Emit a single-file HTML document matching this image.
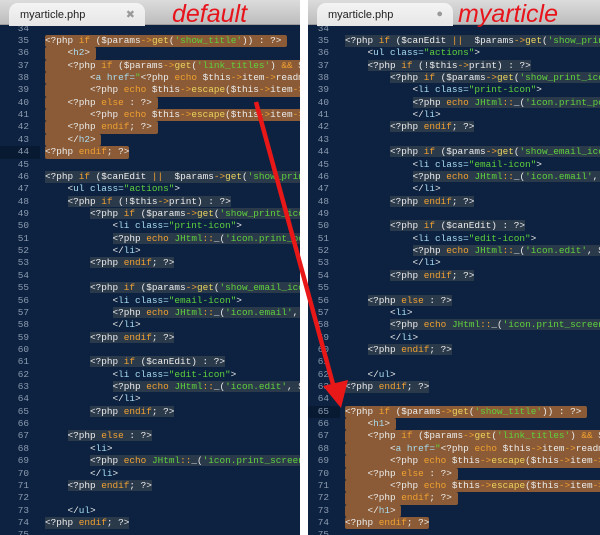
<!DOCTYPE html>
<html><head><meta charset="utf-8"><style>
*{margin:0;padding:0;box-sizing:border-box}
body{width:600px;height:535px;background:#fff;position:relative;overflow:hidden;font-family:"Liberation Mono",monospace}
.panel{position:absolute;top:0;height:535px;background:#0c2240;overflow:hidden}
.tabbar{position:absolute;left:0;top:0;right:0;height:25px;background:linear-gradient(#dcdcdc,#bdbdbd);border-bottom:1px solid #9a9a9a;z-index:3}
.tab{position:absolute;left:9px;top:3px;width:136px;height:23px;background:linear-gradient(#f4f4f4,#e6e6e6);border-radius:9px 9px 0 0;font-family:"Liberation Sans",sans-serif;font-size:11px;color:#222;padding:6px 0 0 11px}
.tab i{position:absolute;right:10px;top:5px;font-style:normal;color:#999;font-size:11px}
.hand{position:absolute;top:0px;font-family:"Liberation Sans",sans-serif;font-size:25px;color:#e8141c;letter-spacing:0px;z-index:4;font-style:italic}
.code{position:absolute;top:22.6px;left:0;right:0}
.l{height:12.36px;line-height:12.36px;font-size:9.4px;white-space:pre;position:relative;color:#ececec}
.n{position:absolute;left:0;width:29px;text-align:right;color:#8c9bb0}
.c{position:absolute;left:45px}
.R .n{width:21px}
.R .c{left:37px}
.cur .n{background:#081a31;width:40px;padding-right:11px}
.R .cur .n{width:32px}
.S{background:#8a5b36;border-radius:2px}
.G{background:#2b3a4b}
.k{color:#f0a030}.s{color:#5fd13c}.f{color:#ecd45e}.o{color:#f0a030}.t{color:#a8dcf0}
</style></head><body>

<div class="panel" style="left:0;width:300px">
<div class="tabbar"><div class="tab">myarticle.php<i>✖</i></div></div>
<div class="hand" style="left:172px">default</div>
<div class="code">
<div class="l"><span class="n">34</span><span class="c"></span></div>
<div class="l"><span class="n">35</span><span class="c S">&lt;?php <span class="k">if</span> ($params<span class="o">-&gt;</span><span class="f">get</span>(<span class="s">'show_title'</span>)) : ?&gt; </span></div>
<div class="l"><span class="n">36</span><span class="c S">    &lt;<span class="t">h2</span>&gt; </span></div>
<div class="l"><span class="n">37</span><span class="c S">    &lt;?php <span class="k">if</span> ($params<span class="o">-&gt;</span><span class="f">get</span>(<span class="s">'link_titles'</span>) <span class="k">&amp;&amp;</span> $params<span class="o">-&gt;</span><span class="f">get</span>(<span class="s">'access-view'</span>)) : ?&gt;</span></div>
<div class="l"><span class="n">38</span><span class="c S">        &lt;<span class="t">a href=</span><span class="s">"</span>&lt;?php <span class="k">echo</span> $this<span class="o">-&gt;</span>item<span class="o">-&gt;</span>readmore_link; ?&gt;<span class="s">"</span>&gt;</span></div>
<div class="l"><span class="n">39</span><span class="c S">        &lt;?php <span class="k">echo</span> $this<span class="o">-&gt;</span><span class="f">escape</span>($this<span class="o">-&gt;</span>item<span class="o">-&gt;</span>title); ?&gt;&lt;/a&gt;</span></div>
<div class="l"><span class="n">40</span><span class="c S">    &lt;?php <span class="k">else</span> : ?&gt; </span></div>
<div class="l"><span class="n">41</span><span class="c S">        &lt;?php <span class="k">echo</span> $this<span class="o">-&gt;</span><span class="f">escape</span>($this<span class="o">-&gt;</span>item<span class="o">-&gt;</span>title); ?&gt;</span></div>
<div class="l"><span class="n">42</span><span class="c S">    &lt;?php <span class="k">endif</span>; ?&gt; </span></div>
<div class="l"><span class="n">43</span><span class="c S">    &lt;/<span class="t">h2</span>&gt; </span></div>
<div class="l cur"><span class="n">44</span><span class="c S">&lt;?php <span class="k">endif</span>; ?&gt;</span></div>
<div class="l"><span class="n">45</span><span class="c"></span></div>
<div class="l"><span class="n">46</span><span class="c G">&lt;?php <span class="k">if</span> ($canEdit <span class="k">||</span>  $params<span class="o">-&gt;</span><span class="f">get</span>(<span class="s">'show_print_icon'</span>)</span></div>
<div class="l"><span class="n">47</span><span class="c">    &lt;<span class="t">ul class=</span><span class="s">"actions"</span>&gt;</span></div>
<div class="l"><span class="n">48</span><span class="c">    <span class="G">&lt;?php <span class="k">if</span> (!$this<span class="o">-&gt;</span>print) : ?&gt;</span></span></div>
<div class="l"><span class="n">49</span><span class="c">        <span class="G">&lt;?php <span class="k">if</span> ($params<span class="o">-&gt;</span><span class="f">get</span>(<span class="s">'show_print_icon'</span>)) : ?&gt;</span></span></div>
<div class="l"><span class="n">50</span><span class="c">            &lt;<span class="t">li class=</span><span class="s">"print-icon"</span>&gt;</span></div>
<div class="l"><span class="n">51</span><span class="c">            <span class="G">&lt;?php <span class="k">echo</span> <span class="s">JHtml</span><span class="o">::</span>_(<span class="s">'icon.print_popup'</span>, $this</span></span></div>
<div class="l"><span class="n">52</span><span class="c">            &lt;/<span class="t">li</span>&gt;</span></div>
<div class="l"><span class="n">53</span><span class="c">        <span class="G">&lt;?php <span class="k">endif</span>; ?&gt;</span></span></div>
<div class="l"><span class="n">54</span><span class="c"></span></div>
<div class="l"><span class="n">55</span><span class="c">        <span class="G">&lt;?php <span class="k">if</span> ($params<span class="o">-&gt;</span><span class="f">get</span>(<span class="s">'show_email_icon'</span>)) : ?&gt;</span></span></div>
<div class="l"><span class="n">56</span><span class="c">            &lt;<span class="t">li class=</span><span class="s">"email-icon"</span>&gt;</span></div>
<div class="l"><span class="n">57</span><span class="c">            <span class="G">&lt;?php <span class="k">echo</span> <span class="s">JHtml</span><span class="o">::</span>_(<span class="s">'icon.email'</span>, $this</span></span></div>
<div class="l"><span class="n">58</span><span class="c">            &lt;/<span class="t">li</span>&gt;</span></div>
<div class="l"><span class="n">59</span><span class="c">        <span class="G">&lt;?php <span class="k">endif</span>; ?&gt;</span></span></div>
<div class="l"><span class="n">60</span><span class="c"></span></div>
<div class="l"><span class="n">61</span><span class="c">        <span class="G">&lt;?php <span class="k">if</span> ($canEdit) : ?&gt;</span></span></div>
<div class="l"><span class="n">62</span><span class="c">            &lt;<span class="t">li class=</span><span class="s">"edit-icon"</span>&gt;</span></div>
<div class="l"><span class="n">63</span><span class="c">            <span class="G">&lt;?php <span class="k">echo</span> <span class="s">JHtml</span><span class="o">::</span>_(<span class="s">'icon.edit'</span>, $this</span></span></div>
<div class="l"><span class="n">64</span><span class="c">            &lt;/<span class="t">li</span>&gt;</span></div>
<div class="l"><span class="n">65</span><span class="c">        <span class="G">&lt;?php <span class="k">endif</span>; ?&gt;</span></span></div>
<div class="l"><span class="n">66</span><span class="c"></span></div>
<div class="l"><span class="n">67</span><span class="c">    <span class="G">&lt;?php <span class="k">else</span> : ?&gt;</span></span></div>
<div class="l"><span class="n">68</span><span class="c">        &lt;<span class="t">li</span>&gt;</span></div>
<div class="l"><span class="n">69</span><span class="c">        <span class="G">&lt;?php <span class="k">echo</span> <span class="s">JHtml</span><span class="o">::</span>_(<span class="s">'icon.print_screen'</span>, $this</span></span></div>
<div class="l"><span class="n">70</span><span class="c">        &lt;/<span class="t">li</span>&gt;</span></div>
<div class="l"><span class="n">71</span><span class="c">    <span class="G">&lt;?php <span class="k">endif</span>; ?&gt;</span></span></div>
<div class="l"><span class="n">72</span><span class="c"></span></div>
<div class="l"><span class="n">73</span><span class="c">    &lt;/<span class="t">ul</span>&gt;</span></div>
<div class="l"><span class="n">74</span><span class="c G">&lt;?php <span class="k">endif</span>; ?&gt;</span></div>
<div class="l"><span class="n">75</span><span class="c"></span></div>
</div>
</div>

<div class="panel R" style="left:308px;width:292px">
<div class="tabbar"><div class="tab">myarticle.php<i>●</i></div></div>
<div class="hand" style="left:150px">myarticle</div>
<div class="code">
<div class="l"><span class="n">34</span><span class="c"></span></div>
<div class="l"><span class="n">35</span><span class="c G">&lt;?php <span class="k">if</span> ($canEdit <span class="k">||</span>  $params<span class="o">-&gt;</span><span class="f">get</span>(<span class="s">'show_print_icon'</span>)</span></div>
<div class="l"><span class="n">36</span><span class="c">    &lt;<span class="t">ul class=</span><span class="s">"actions"</span>&gt;</span></div>
<div class="l"><span class="n">37</span><span class="c">    <span class="G">&lt;?php <span class="k">if</span> (!$this<span class="o">-&gt;</span>print) : ?&gt;</span></span></div>
<div class="l"><span class="n">38</span><span class="c">        <span class="G">&lt;?php <span class="k">if</span> ($params<span class="o">-&gt;</span><span class="f">get</span>(<span class="s">'show_print_icon'</span>)) : ?&gt;</span></span></div>
<div class="l"><span class="n">39</span><span class="c">            &lt;<span class="t">li class=</span><span class="s">"print-icon"</span>&gt;</span></div>
<div class="l"><span class="n">40</span><span class="c">            <span class="G">&lt;?php <span class="k">echo</span> <span class="s">JHtml</span><span class="o">::</span>_(<span class="s">'icon.print_popup'</span>, $this</span></span></div>
<div class="l"><span class="n">41</span><span class="c">            &lt;/<span class="t">li</span>&gt;</span></div>
<div class="l"><span class="n">42</span><span class="c">        <span class="G">&lt;?php <span class="k">endif</span>; ?&gt;</span></span></div>
<div class="l"><span class="n">43</span><span class="c"></span></div>
<div class="l"><span class="n">44</span><span class="c">        <span class="G">&lt;?php <span class="k">if</span> ($params<span class="o">-&gt;</span><span class="f">get</span>(<span class="s">'show_email_icon'</span>)) : ?&gt;</span></span></div>
<div class="l"><span class="n">45</span><span class="c">            &lt;<span class="t">li class=</span><span class="s">"email-icon"</span>&gt;</span></div>
<div class="l"><span class="n">46</span><span class="c">            <span class="G">&lt;?php <span class="k">echo</span> <span class="s">JHtml</span><span class="o">::</span>_(<span class="s">'icon.email'</span>, $this</span></span></div>
<div class="l"><span class="n">47</span><span class="c">            &lt;/<span class="t">li</span>&gt;</span></div>
<div class="l"><span class="n">48</span><span class="c">        <span class="G">&lt;?php <span class="k">endif</span>; ?&gt;</span></span></div>
<div class="l"><span class="n">49</span><span class="c"></span></div>
<div class="l"><span class="n">50</span><span class="c">        <span class="G">&lt;?php <span class="k">if</span> ($canEdit) : ?&gt;</span></span></div>
<div class="l"><span class="n">51</span><span class="c">            &lt;<span class="t">li class=</span><span class="s">"edit-icon"</span>&gt;</span></div>
<div class="l"><span class="n">52</span><span class="c">            <span class="G">&lt;?php <span class="k">echo</span> <span class="s">JHtml</span><span class="o">::</span>_(<span class="s">'icon.edit'</span>, $this</span></span></div>
<div class="l"><span class="n">53</span><span class="c">            &lt;/<span class="t">li</span>&gt;</span></div>
<div class="l"><span class="n">54</span><span class="c">        <span class="G">&lt;?php <span class="k">endif</span>; ?&gt;</span></span></div>
<div class="l"><span class="n">55</span><span class="c"></span></div>
<div class="l"><span class="n">56</span><span class="c">    <span class="G">&lt;?php <span class="k">else</span> : ?&gt;</span></span></div>
<div class="l"><span class="n">57</span><span class="c">        &lt;<span class="t">li</span>&gt;</span></div>
<div class="l"><span class="n">58</span><span class="c">        <span class="G">&lt;?php <span class="k">echo</span> <span class="s">JHtml</span><span class="o">::</span>_(<span class="s">'icon.print_screen'</span>, $this</span></span></div>
<div class="l"><span class="n">59</span><span class="c">        &lt;/<span class="t">li</span>&gt;</span></div>
<div class="l"><span class="n">60</span><span class="c">    <span class="G">&lt;?php <span class="k">endif</span>; ?&gt;</span></span></div>
<div class="l"><span class="n">61</span><span class="c"></span></div>
<div class="l"><span class="n">62</span><span class="c">    &lt;/<span class="t">ul</span>&gt;</span></div>
<div class="l"><span class="n">63</span><span class="c G">&lt;?php <span class="k">endif</span>; ?&gt;</span></div>
<div class="l"><span class="n">64</span><span class="c"></span></div>
<div class="l cur"><span class="n">65</span><span class="c S">&lt;?php <span class="k">if</span> ($params<span class="o">-&gt;</span><span class="f">get</span>(<span class="s">'show_title'</span>)) : ?&gt; </span></div>
<div class="l"><span class="n">66</span><span class="c S">    &lt;<span class="t">h1</span>&gt; </span></div>
<div class="l"><span class="n">67</span><span class="c S">    &lt;?php <span class="k">if</span> ($params<span class="o">-&gt;</span><span class="f">get</span>(<span class="s">'link_titles'</span>) <span class="k">&amp;&amp;</span> $params<span class="o">-&gt;</span><span class="f">get</span>(<span class="s">'access-view'</span>)) : ?&gt;</span></div>
<div class="l"><span class="n">68</span><span class="c S">        &lt;<span class="t">a href=</span><span class="s">"</span>&lt;?php <span class="k">echo</span> $this<span class="o">-&gt;</span>item<span class="o">-&gt;</span>readmore_link; ?&gt;<span class="s">"</span>&gt;</span></div>
<div class="l"><span class="n">69</span><span class="c S">        &lt;?php <span class="k">echo</span> $this<span class="o">-&gt;</span><span class="f">escape</span>($this<span class="o">-&gt;</span>item<span class="o">-&gt;</span>title); ?&gt;&lt;/a&gt;</span></div>
<div class="l"><span class="n">70</span><span class="c S">    &lt;?php <span class="k">else</span> : ?&gt; </span></div>
<div class="l"><span class="n">71</span><span class="c S">        &lt;?php <span class="k">echo</span> $this<span class="o">-&gt;</span><span class="f">escape</span>($this<span class="o">-&gt;</span>item<span class="o">-&gt;</span>title); ?&gt;</span></div>
<div class="l"><span class="n">72</span><span class="c S">    &lt;?php <span class="k">endif</span>; ?&gt; </span></div>
<div class="l"><span class="n">73</span><span class="c S">    &lt;/<span class="t">h1</span>&gt; </span></div>
<div class="l"><span class="n">74</span><span class="c S">&lt;?php <span class="k">endif</span>; ?&gt;</span></div>
<div class="l"><span class="n">75</span><span class="c"></span></div>
</div>
</div>

<svg style="position:absolute;left:0;top:0;z-index:10" width="600" height="535">
<line x1="256" y1="102" x2="334" y2="388" stroke="#e81818" stroke-width="4.5"/>
<polygon points="341,408 323,386 348,380" fill="#e81818"/>
</svg>
</body></html>
